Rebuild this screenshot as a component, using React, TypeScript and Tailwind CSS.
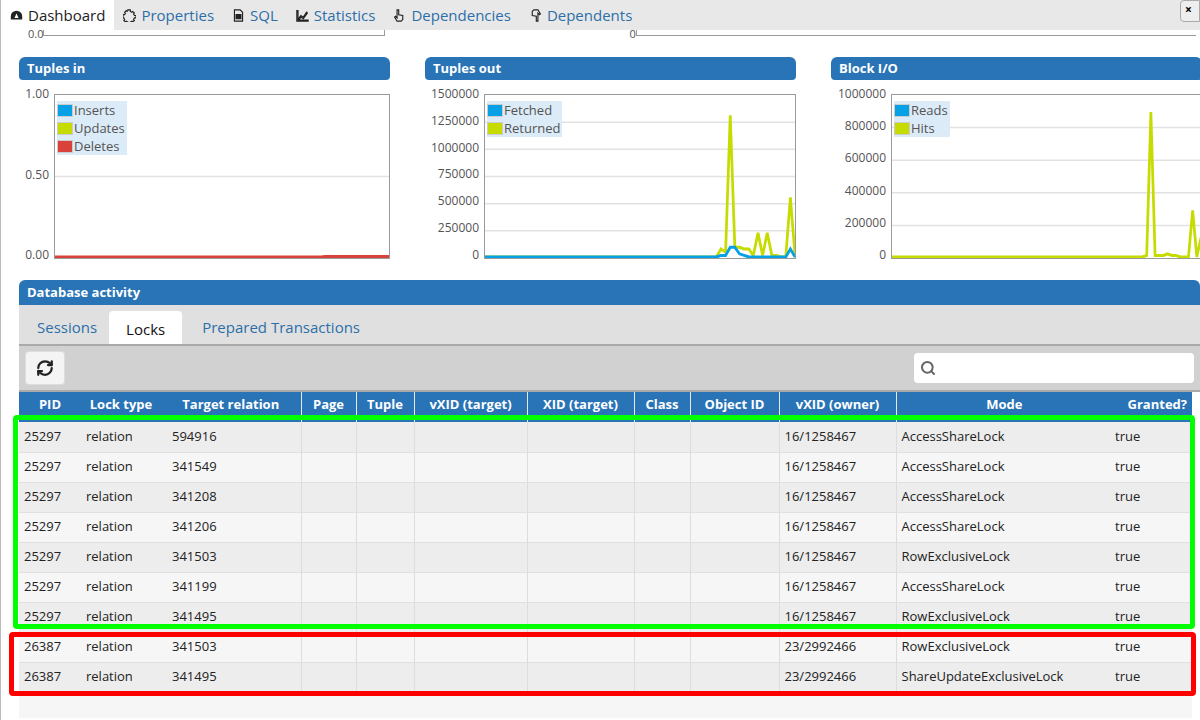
import React from "react";
import { RefreshCw, Search } from "lucide-react";

const font = { fontFamily: '"Open Sans", "Noto Sans", sans-serif' };

const cols = [
  { h: "PID", w: 62 },
  { h: "Lock type", w: 80 },
  { h: "Target relation", w: 140 },
  { h: "Page", w: 55 },
  { h: "Tuple", w: 58 },
  { h: "vXID (target)", w: 113 },
  { h: "XID (target)", w: 107 },
  { h: "Class", w: 56 },
  { h: "Object ID", w: 89 },
  { h: "vXID (owner)", w: 117 },
  { h: "Mode", w: 216 },
  { h: "Granted?", w: 80 },
];

const rows = [
  ["25297", "594916", "16/1258467", "AccessShareLock"],
  ["25297", "341549", "16/1258467", "AccessShareLock"],
  ["25297", "341208", "16/1258467", "AccessShareLock"],
  ["25297", "341206", "16/1258467", "AccessShareLock"],
  ["25297", "341503", "16/1258467", "RowExclusiveLock"],
  ["25297", "341199", "16/1258467", "AccessShareLock"],
  ["25297", "341495", "16/1258467", "RowExclusiveLock"],
  ["26387", "341503", "23/2992466", "RowExclusiveLock"],
  ["26387", "341495", "23/2992466", "ShareUpdateExclusiveLock"],
];

type Series = { color: string; pts: number[] };

function Chart({ title, labels, labelW, legend, series }: { title: string; labels: string[]; labelW: number; legend: { name: string; color: string }[]; series: Series[] }) {
  const W = 340, H = 165;
  return (
    <div className="flex flex-col">
      <div className="h-[23px] bg-[#2874b6] rounded-t-md rounded-b-sm text-white text-[13px] font-bold px-2 flex items-center">{title}</div>
      <div className="flex mt-[14px]">
        <div className="flex flex-col justify-between items-end text-[12px] text-[#545454] pr-[5px] h-[175px] -mt-[7px]" style={{ width: labelW }}>
          {labels.map((l) => <span key={l} className="leading-[14px]">{l}</span>)}
        </div>
        <div className="relative flex-1 h-[165px] border border-[#9a9a9a] bg-white">
          <svg className="absolute inset-0 w-full h-full" viewBox={`0 0 ${W} ${H}`} preserveAspectRatio="none">
            {labels.slice(1, -1).map((_, i) => {
              const y = ((i + 1) * H) / (labels.length - 1);
              return <line key={i} x1="0" x2={W} y1={y} y2={y} stroke="#e2e2e2" strokeWidth="1.5" />;
            })}
            {series.map((s, i) => (
              <polyline key={i} fill="none" stroke={s.color} strokeWidth="3" points={s.pts.map((v, j) => `${(j * W) / (s.pts.length - 1)},${H - 1 - v * (H - 2)}`).join(" ")} />
            ))}
          </svg>
          <div className="absolute left-[2px] top-[6px] bg-[#dcebf8] pr-[2px] text-[13px] text-[#545454] leading-[18px]">
            {legend.map((l) => (
              <div key={l.name} className="flex items-center">
                <span className="w-[16px] h-[13px] border border-[#ccc] mr-[1px]" style={{ background: l.color }} />{l.name}
              </div>
            ))}
          </div>
        </div>
      </div>
    </div>
  );
}

const zeros = (n: number) => Array(n).fill(0);
const outY = [...zeros(50), 0, 0.05, 0.03, 0.88, 0.06, 0.06, 0.05, 0.05, 0.01, 0.15, 0.01, 0.15, 0.01, 0.01, 0, 0, 0.37, 0.01];
const outB = [...zeros(50), 0, 0.01, 0.01, 0.06, 0.06, 0.02, 0.01, 0, 0, 0, 0, 0, 0, 0, 0, 0, 0.05, 0];
const ioY = [...zeros(60), 0, 0.01, 0.9, 0.01, 0.01, 0.01, 0.02, 0.01, 0.01, 0, 0, 0, 0.29, 0, 0.12];

const tabIcon = "w-[13px] h-[13px] text-[#222]";

export default function App() {
  return (
    <div className="w-[1200px] h-[720px] overflow-hidden bg-white relative border-l border-[#bbb]" style={font}>
      <div className="h-[30px] bg-[#e8e8e8] flex items-end text-[15px]">
        <div className="bg-white h-[30px] px-[9px] flex items-center gap-[5px] text-[#222]">
          <svg className={tabIcon} viewBox="0 0 16 16"><path d="M8 2a7 7 0 0 0-7 7v4h14V9a7 7 0 0 0-7-7zm0 3.5 2.5 5.5H5.5z" fill="#222" /></svg>Dashboard
        </div>
        {[
          ["Properties", "M6 1h3v2l2 1 1-1 2 2-1 1 1 2h2v3h-2l-1 2 1 1-2 2-1-1-2 1v2H6v-2l-2-1-1 1-2-2 1-1-1-2H0V7h2l1-2-1-1 2-2 1 1 1-1z"],
          ["SQL", "M3 1h7l3 3v11H3zm2 6h6v1H5zm0 2h6v1H5zm0 2h6v1H5z"],
          ["Statistics", "M1 2v13h14v-1.5H2.5V2zm2 10 3-4 3 2 4-6 1 1-5 7-3-2-2 3z"],
          ["Dependencies", "M5 1h2v6l5 1v5l-2 2H5L2 10l1-1 2 2z"],
          ["Dependents", "M11 15H9V9L4 8V3l2-2h5l3 5-1 1-2-2z"],
        ].map(([t, d]) => (
          <div key={t} className="h-[30px] px-[9px] flex items-center gap-[5px] text-[#2c6fa8]">
            <svg className={tabIcon} viewBox="0 0 16 16"><path d={d} fill="none" stroke="#222" strokeWidth="1.4" /></svg>{t}
          </div>
        ))}
        <div className="flex-1" />
        <div className="w-[20px] h-[22px] mb-[8px] border border-[#aaa] rounded-l bg-[#eee] text-[12px] font-bold pl-1">×</div>
      </div>

      <div className="h-[10px] flex text-[11px] text-[#545454] leading-[8px]">
        <span className="ml-[27px]">0.0</span>
        <div className="w-[342px] border-b border-l border-r border-[#9a9a9a] h-[6px]" />
        <span className="ml-[244px]">0</span>
        <div className="w-[560px] border-b border-l border-[#9a9a9a] h-[6px]" />
      </div>

      <div className="grid grid-cols-[371px_371px_371px] gap-x-[35px] pl-[18px] mt-[17px]">
        <Chart title="Tuples in" labelW={35} labels={["1.00", "0.50", "0.00"]} legend={[{ name: "Inserts", color: "#05a0e6" }, { name: "Updates", color: "#c6dc00" }, { name: "Deletes", color: "#d9423a" }]} series={[{ color: "#d9423a", pts: [...zeros(80), ...Array(20).fill(0.003)] }]} />
        <Chart title="Tuples out" labelW={59} labels={["1500000", "1250000", "1000000", "750000", "500000", "250000", "0"]} legend={[{ name: "Fetched", color: "#05a0e6" }, { name: "Returned", color: "#c6dc00" }]} series={[{ color: "#c6dc00", pts: outY }, { color: "#05a0e6", pts: outB }]} />
        <Chart title="Block I/O" labelW={60} labels={["1000000", "800000", "600000", "400000", "200000", "0"]} legend={[{ name: "Reads", color: "#05a0e6" }, { name: "Hits", color: "#c6dc00" }]} series={[{ color: "#c6dc00", pts: ioY }]} />
      </div>

      <div className="ml-[18px] mt-[18px]">
        <div className="h-[25px] bg-[#2874b6] rounded-t-md text-white text-[13px] font-bold px-2 flex items-center">Database activity</div>
        <div className="h-[39px] bg-[#e0e0e0] flex items-end pl-[6px] text-[15px]">
          <div className="px-[12px] h-[33px] flex items-center text-[#2c6fa8]">Sessions</div>
          <div className="px-[17px] h-[33px] flex items-center bg-white rounded-t text-[#111] pt-[3px]">Locks</div>
          <div className="px-[20px] h-[33px] flex items-center text-[#2c6fa8]">Prepared Transactions</div>
        </div>
        <div className="h-[48px] bg-[#d1d1d1] border-y-2 border-[#aaa] flex items-center justify-between px-[6px]">
          <button className="w-[40px] h-[34px] bg-[#f4f4f4] rounded border border-[#ddd] flex items-center justify-center"><RefreshCw size={18} strokeWidth={3} className="text-[#222]" /></button>
          <div className="w-[280px] h-[30px] bg-white rounded flex items-center px-[6px]"><Search size={16} strokeWidth={3} className="text-[#666]" /></div>
        </div>
        <table className="border-collapse table-fixed text-[13px]" style={{ width: 1173 }}>
          <colgroup>{cols.map((c) => <col key={c.h} style={{ width: c.w }} />)}</colgroup>
          <thead>
            <tr className="h-[30px] bg-[#2874b6] text-white">
              {cols.map((c, i) => (
                <th key={c.h} className={`font-bold px-[5px] pt-[3px] align-top ${i >= 2 && i < 10 ? "border-r border-[#e8e8e8]" : ""} ${i === 11 ? "text-right" : "text-center"}`}>{c.h}</th>
              ))}
            </tr>
          </thead>
          <tbody className="text-[#222]">
            {rows.map((r, i) => (
              <tr key={i} className={`h-[30px] ${i % 2 === 0 ? "bg-[#ededed]" : "bg-[#f6f6f6]"} border-b border-[#e0e0e0]`}>
                <td className="px-[5px]">{r[0]}</td>
                <td className="px-[5px]">relation</td>
                <td className="px-[11px] border-r border-[#ddd]">{r[1]}</td>
                <td className="border-r border-[#ddd]" />
                <td className="border-r border-[#ddd]" />
                <td className="border-r border-[#ddd]" />
                <td className="border-r border-[#ddd]" />
                <td className="border-r border-[#ddd]" />
                <td className="border-r border-[#ddd]" />
                <td className="px-[5px] border-r border-[#ddd]">{r[2]}</td>
                <td className="px-[5px]">{r[3]}</td>
                <td className="pl-[3px]">true</td>
              </tr>
            ))}
            <tr className="h-[26px] bg-[#f6f6f6]"><td colSpan={12} /></tr>
          </tbody>
        </table>
      </div>

      <div className="absolute left-[12px] top-[415px] w-[1182px] h-[214px] border-[5px] border-[#00ff00] rounded-sm pointer-events-none" />
      <div className="absolute left-[8px] top-[632px] w-[1187px] h-[64px] border-[5px] border-[#ff0000] rounded-sm pointer-events-none" />
    </div>
  );
}
